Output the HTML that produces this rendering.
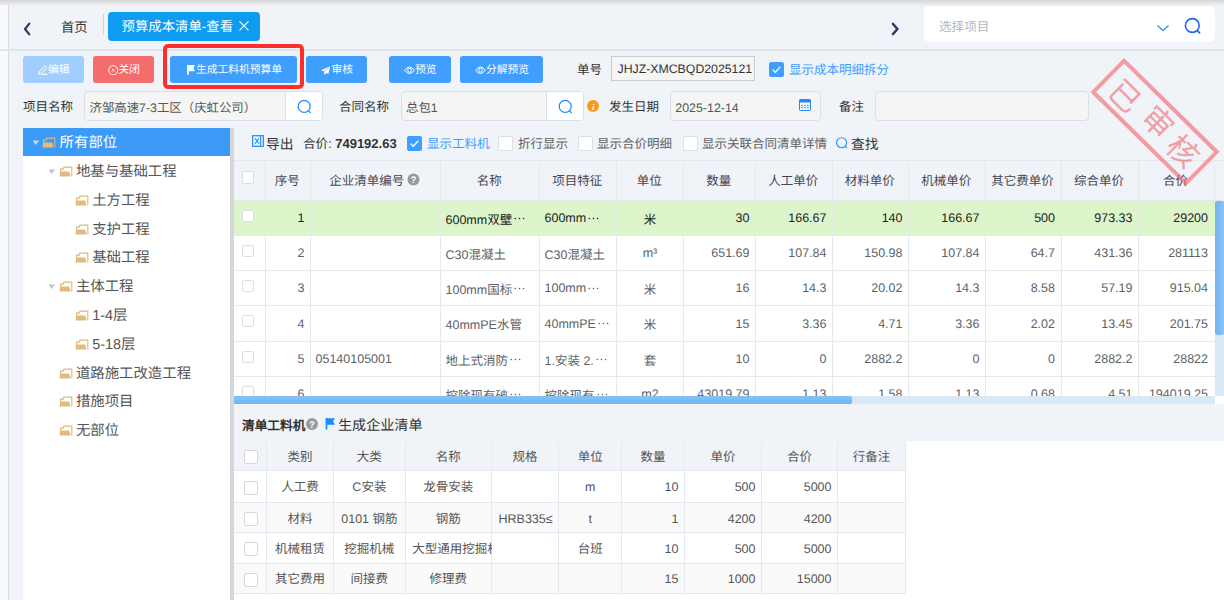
<!DOCTYPE html>
<html lang="zh-CN">
<head>
<meta charset="utf-8">
<style>
*{margin:0;padding:0;box-sizing:border-box}
html,body{width:1224px;height:600px;overflow:hidden}
body{position:relative;background:#f0f3f8;font-family:"Liberation Sans",sans-serif;color:#333;font-size:12.5px;text-rendering:geometricPrecision}
.a{position:absolute;white-space:nowrap}
.btn{position:absolute;top:56px;height:27px;border-radius:3px;color:#fff;font-size:10.75px;display:flex;align-items:center;justify-content:center;background:#409eff}
.btn svg{margin-right:1px}
.lbl{position:absolute;font-size:12.5px;color:#333;line-height:16px}
.inp{position:absolute;top:91px;height:29.5px;border:1px solid #dcdfe6;border-radius:4px;background:#f5f5f5;overflow:hidden}
.inp .t{position:absolute;left:4.5px;top:2.5px;line-height:27px;font-size:12.4px;color:#555}
.inp .s{position:absolute;top:0;right:0;bottom:0;background:#fff;border-left:1px solid #dcdfe6}
.cb{position:absolute;width:15px;height:15px;border:1px solid #dcdfe6;border-radius:2px;background:#fff}
.cb.on{background:#409eff;border-color:#409eff}
.tree{position:absolute;left:23px;top:128px;width:207px;height:472px;background:#fff}
.tr{position:absolute;left:0;width:207px;height:28px;font-size:14.4px;color:#555;line-height:28px}
.tr .tx{position:absolute;top:0}
.tr svg{position:absolute;top:10px}
.tbl{position:absolute}
.el{display:inline-block;width:13.5px;height:3px;vertical-align:3.2px}
.th{position:absolute;display:flex;align-items:center;justify-content:center;color:#555;font-size:12.5px}
.td{position:absolute;display:flex;align-items:center;font-size:12.5px;color:#606266;overflow:hidden;white-space:nowrap}
</style>
</head>
<body>
<!-- top shadow -->
<div class="a" style="left:0;top:0;width:1224px;height:6px;background:linear-gradient(#d6d6d6,#f0f3f8)"></div>
<div class="a" style="left:0;top:5px;width:9px;height:595px;background:#f9fafc;border-right:1px solid #d8dadf"></div>
<div class="a" style="left:0;top:49px;width:1224px;height:2px;background:#dfe3ea"></div>
<!-- chevron left -->
<svg class="a" style="left:22px;top:21px" width="10" height="16" viewBox="0 0 10 16"><path d="M7.3 2.6 L3 8 L7.3 13.4" fill="none" stroke="#2f3a62" stroke-width="2.2" stroke-linecap="round" stroke-linejoin="round"/></svg>
<div class="a" style="left:61px;top:18.7px;font-size:13.3px;line-height:18px;color:#333">首页</div>
<div class="a" style="left:103px;top:14px;width:1px;height:21px;background:#cfd3d9"></div>
<div class="a" style="left:108px;top:12px;width:152px;height:29px;border-radius:4px;background:#0d9cf0"></div>
<div class="a" style="left:121.5px;top:17px;font-size:13.4px;line-height:20px;color:#fff">预算成本清单-查看</div>
<svg class="a" style="left:238px;top:20px" width="12" height="12" viewBox="0 0 12 12"><path d="M1.5 1.3 L10.5 10.3 M10.5 1.3 L1.5 10.3" stroke="#fff" stroke-width="1.2"/></svg>
<!-- chevron right -->
<svg class="a" style="left:889px;top:21px" width="12" height="16" viewBox="0 0 12 16"><path d="M4 3 L8.5 8 L4 13" fill="none" stroke="#2f3a62" stroke-width="2.6" stroke-linecap="round" stroke-linejoin="round"/></svg>
<div class="a" style="left:924px;top:6px;width:291px;height:36px;border-radius:5px;background:#fff"></div>
<div class="a" style="left:939px;top:17.5px;font-size:12.6px;line-height:18px;color:#b4b8bf">选择项目</div>
<svg class="a" style="left:1155.5px;top:22.8px" width="14" height="10" viewBox="0 0 14 10"><path d="M1.5 2.5 L7 7.5 L12.5 2.5" fill="none" stroke="#3c8ef0" stroke-width="1.3"/></svg>
<svg class="a" style="left:1182px;top:16px" width="20" height="20" viewBox="0 0 20 20"><circle cx="10.3" cy="9.5" r="6.9" fill="none" stroke="#2563f5" stroke-width="1.6"/><path d="M15.3 14.6 L17.6 16.9" stroke="#2563f5" stroke-width="1.7" stroke-linecap="round"/></svg>

<!-- buttons -->
<div class="a" style="left:23px;top:56px;width:61px;height:27px;border-radius:3px;background:#a0cfff"></div><svg class="a" style="left:38px;top:65px" width="10" height="10" viewBox="0 0 10 10"><path d="M0.7 9.3 L1.1 7 L6.9 0.8 L8.9 2.5 L3.1 8.8 Z" fill="none" stroke="#fff" stroke-width="1"/><path d="M3.8 9.4 H9.2" stroke="#fff" stroke-width="1.1"/></svg><div class="a" style="left:48px;top:62.7px;font-size:10.75px;line-height:14px;color:#fff">编辑</div><div class="a" style="left:93px;top:56px;width:61px;height:27px;border-radius:3px;background:#f56c6c"></div><svg class="a" style="left:107.5px;top:64.7px" width="10.5" height="10.5" viewBox="0 0 10.5 10.5"><circle cx="5.25" cy="5.25" r="4.6" fill="none" stroke="#fff" stroke-width="1"/><path d="M3.9 3.9 L6.6 6.6 M6.6 3.9 L3.9 6.6" stroke="#fff" stroke-width="0.9"/></svg><div class="a" style="left:118.4px;top:62.7px;font-size:10.75px;line-height:14px;color:#fff">关闭</div><div class="a" style="left:170px;top:56px;width:127px;height:27px;border-radius:3px;background:#409eff"></div><svg class="a" style="left:187px;top:65px" width="8" height="10" viewBox="0 0 8 10"><path d="M0 0 H1.8 V9.8 H0 Z" fill="#fff"/><path d="M1.5 0 H7.8 L6.6 3.1 L7.8 6.2 H1.5 Z" fill="#fff"/></svg><div class="a" style="left:196.1px;top:62.7px;font-size:10.75px;line-height:14px;color:#fff">生成工料机预算单</div><div class="a" style="left:306px;top:56px;width:61px;height:27px;border-radius:3px;background:#409eff"></div><svg class="a" style="left:320.5px;top:65.5px" width="9.5" height="9.5" viewBox="0 0 9.5 9.5"><path d="M9.3 0.2 L0.2 4.3 L3.1 5.6 L3.5 9.3 L5.2 7 L7.3 8.1 Z" fill="#fff"/><path d="M3.1 5.6 L8.5 1" stroke="#409eff" stroke-width="0.6"/></svg><div class="a" style="left:331.5px;top:62.7px;font-size:10.75px;line-height:14px;color:#fff">审核</div><div class="a" style="left:389px;top:56px;width:62px;height:27px;border-radius:3px;background:#409eff"></div><svg class="a" style="left:403.8px;top:65.8px" width="11" height="8.5" viewBox="0 0 11 8.5"><path d="M0.6 4.25 Q5.5 -2.2 10.4 4.25 Q5.5 10.7 0.6 4.25 Z" fill="none" stroke="#fff" stroke-width="1"/><circle cx="5.5" cy="4.25" r="1.9" fill="none" stroke="#fff" stroke-width="1"/></svg><div class="a" style="left:415px;top:62.7px;font-size:10.75px;line-height:14px;color:#fff">预览</div><div class="a" style="left:460px;top:56px;width:83px;height:27px;border-radius:3px;background:#409eff"></div><svg class="a" style="left:474.7px;top:65.8px" width="11" height="8.5" viewBox="0 0 11 8.5"><path d="M0.6 4.25 Q5.5 -2.2 10.4 4.25 Q5.5 10.7 0.6 4.25 Z" fill="none" stroke="#fff" stroke-width="1"/><circle cx="5.5" cy="4.25" r="1.9" fill="none" stroke="#fff" stroke-width="1"/></svg><div class="a" style="left:486px;top:62.7px;font-size:10.75px;line-height:14px;color:#fff">分解预览</div>
<div class="a" style="left:163px;top:44px;width:141px;height:45px;border:4px solid #fd2e2e;border-radius:5px"></div>

<div class="lbl" style="left:577px;top:62.2px">单号</div>
<div class="a" style="left:611px;top:56px;width:144px;height:25px;border:1px solid #c9cbcf;background:#f5f5f5;font-size:12.3px;line-height:25px;padding-left:5.5px;color:#333;overflow:hidden">JHJZ-XMCBQD2025121</div>
<div class="cb on" style="left:769px;top:62px"><svg width="15" height="15" viewBox="0 0 15 15" style="position:absolute;left:-1px;top:-1px"><path d="M3.6 7.6 L6.3 10.3 L11.4 4.6" fill="none" stroke="#fff" stroke-width="1.3"/></svg></div>
<div class="lbl" style="left:789px;top:62.2px;color:#409eff">显示成本明细拆分</div>

<div class="lbl" style="left:23px;top:98.9px">项目名称</div>
<div class="inp" style="left:84px;width:238.5px"><div class="t">济邹高速7-3工区（庆虹公司）</div><div class="s" style="width:37px"><svg style="position:absolute;left:10px;top:5.5px" width="18" height="18" viewBox="0 0 18 18"><circle cx="8.2" cy="8.4" r="6" fill="none" stroke="#1a8cff" stroke-width="1.25"/><path d="M12.4 12.6 L14.4 14.6" stroke="#1a8cff" stroke-width="1.3" stroke-linecap="round"/></svg></div></div>
<div class="lbl" style="left:339px;top:98.9px">合同名称</div>
<div class="inp" style="left:400.5px;width:183px"><div class="t">总包1</div><div class="s" style="width:37px"><svg style="position:absolute;left:10px;top:5.5px" width="18" height="18" viewBox="0 0 18 18"><circle cx="8.2" cy="8.4" r="6" fill="none" stroke="#1a8cff" stroke-width="1.25"/><path d="M12.4 12.6 L14.4 14.6" stroke="#1a8cff" stroke-width="1.3" stroke-linecap="round"/></svg></div></div>
<svg class="a" style="left:587px;top:100px" width="12" height="12" viewBox="0 0 12 12"><circle cx="6" cy="6" r="6" fill="#f79a1f"/><text x="6.3" y="10" text-anchor="middle" font-size="9" font-style="italic" font-weight="bold" fill="#fff" font-family="Liberation Serif">i</text></svg>
<div class="lbl" style="left:609px;top:98.9px">发生日期</div>
<div class="inp" style="left:669.8px;width:151.3px"><div class="t">2025-12-14</div><svg style="position:absolute;left:128.2px;top:6.7px" width="12" height="12" viewBox="0 0 12 12"><rect x="0.5" y="0.5" width="11" height="11" rx="0.8" fill="none" stroke="#1a8cff" stroke-width="1"/><rect x="0.5" y="0.5" width="11" height="3" fill="#1a8cff"/><g fill="#1a8cff"><rect x="2.3" y="5.9" width="1.5" height="1.1"/><rect x="5.2" y="5.9" width="1.5" height="1.1"/><rect x="8.1" y="5.9" width="1.5" height="1.1"/><rect x="2.3" y="8.1" width="1.5" height="1.1"/><rect x="5.2" y="8.1" width="1.5" height="1.1"/><rect x="8.1" y="8.1" width="1.5" height="1.1"/></g></svg></div>
<div class="lbl" style="left:839px;top:98.9px">备注</div>
<div class="inp" style="left:875px;width:214px"></div>

<!-- tree -->
<div class="tree"></div>
<div class="a" style="left:230px;top:128px;width:4px;height:472px;background:#d5d7db"></div>


<div class="a" style="left:23px;top:128px;width:207px;height:27.8px;background:#3d9bf8"></div>
<svg class="a" style="left:32px;top:139.7px" width="8" height="6" viewBox="0 0 8 6"><path d="M0.5 0.5 H7 L3.75 5 Z" fill="#c8d6ea"/></svg>
<svg class="a" style="left:42.4px;top:137.2px" width="14" height="12" viewBox="0 0 14 12"><path d="M1.6 10.3 V3.1 H4.2 L4.9 1.1 H12.8 V10.3" fill="none" stroke="#dfb676" stroke-width="1.1"/><path d="M0.6 10.6 L1 5.6 H10.2 L11.6 10.6 Z" fill="#e0bb7c"/></svg>
<div class="a" style="left:59.6px;top:133.2px;line-height:20px;font-size:14.4px;color:#fff">所有部位</div>
<svg class="a" style="left:48px;top:168.5px" width="8" height="6" viewBox="0 0 8 6"><path d="M0.5 0.5 H7 L3.75 5 Z" fill="#c0c4cc"/></svg>
<svg class="a" style="left:58.8px;top:166.0px" width="14" height="12" viewBox="0 0 14 12"><path d="M1.6 10.3 V3.1 H4.2 L4.9 1.1 H12.8 V10.3" fill="none" stroke="#dfb676" stroke-width="1.1"/><path d="M0.6 10.6 L1 5.6 H10.2 L11.6 10.6 Z" fill="#e0bb7c"/></svg>
<div class="a" style="left:75.9px;top:162.0px;line-height:20px;font-size:14.4px;color:#555">地基与基础工程</div>
<svg class="a" style="left:74.9px;top:194.8px" width="14" height="12" viewBox="0 0 14 12"><path d="M1.6 10.3 V3.1 H4.2 L4.9 1.1 H12.8 V10.3" fill="none" stroke="#dfb676" stroke-width="1.1"/><path d="M0.6 10.6 L1 5.6 H10.2 L11.6 10.6 Z" fill="#e0bb7c"/></svg>
<div class="a" style="left:92.2px;top:190.8px;line-height:20px;font-size:14.4px;color:#555">土方工程</div>
<svg class="a" style="left:74.9px;top:223.6px" width="14" height="12" viewBox="0 0 14 12"><path d="M1.6 10.3 V3.1 H4.2 L4.9 1.1 H12.8 V10.3" fill="none" stroke="#dfb676" stroke-width="1.1"/><path d="M0.6 10.6 L1 5.6 H10.2 L11.6 10.6 Z" fill="#e0bb7c"/></svg>
<div class="a" style="left:92.2px;top:219.6px;line-height:20px;font-size:14.4px;color:#555">支护工程</div>
<svg class="a" style="left:74.9px;top:252.4px" width="14" height="12" viewBox="0 0 14 12"><path d="M1.6 10.3 V3.1 H4.2 L4.9 1.1 H12.8 V10.3" fill="none" stroke="#dfb676" stroke-width="1.1"/><path d="M0.6 10.6 L1 5.6 H10.2 L11.6 10.6 Z" fill="#e0bb7c"/></svg>
<div class="a" style="left:92.2px;top:248.4px;line-height:20px;font-size:14.4px;color:#555">基础工程</div>
<svg class="a" style="left:48px;top:283.7px" width="8" height="6" viewBox="0 0 8 6"><path d="M0.5 0.5 H7 L3.75 5 Z" fill="#c0c4cc"/></svg>
<svg class="a" style="left:58.8px;top:281.2px" width="14" height="12" viewBox="0 0 14 12"><path d="M1.6 10.3 V3.1 H4.2 L4.9 1.1 H12.8 V10.3" fill="none" stroke="#dfb676" stroke-width="1.1"/><path d="M0.6 10.6 L1 5.6 H10.2 L11.6 10.6 Z" fill="#e0bb7c"/></svg>
<div class="a" style="left:75.9px;top:277.2px;line-height:20px;font-size:14.4px;color:#555">主体工程</div>
<svg class="a" style="left:74.9px;top:310.0px" width="14" height="12" viewBox="0 0 14 12"><path d="M1.6 10.3 V3.1 H4.2 L4.9 1.1 H12.8 V10.3" fill="none" stroke="#dfb676" stroke-width="1.1"/><path d="M0.6 10.6 L1 5.6 H10.2 L11.6 10.6 Z" fill="#e0bb7c"/></svg>
<div class="a" style="left:92.2px;top:306.0px;line-height:20px;font-size:14.4px;color:#555">1-4层</div>
<svg class="a" style="left:74.9px;top:338.8px" width="14" height="12" viewBox="0 0 14 12"><path d="M1.6 10.3 V3.1 H4.2 L4.9 1.1 H12.8 V10.3" fill="none" stroke="#dfb676" stroke-width="1.1"/><path d="M0.6 10.6 L1 5.6 H10.2 L11.6 10.6 Z" fill="#e0bb7c"/></svg>
<div class="a" style="left:92.2px;top:334.8px;line-height:20px;font-size:14.4px;color:#555">5-18层</div>
<svg class="a" style="left:58.8px;top:367.6px" width="14" height="12" viewBox="0 0 14 12"><path d="M1.6 10.3 V3.1 H4.2 L4.9 1.1 H12.8 V10.3" fill="none" stroke="#dfb676" stroke-width="1.1"/><path d="M0.6 10.6 L1 5.6 H10.2 L11.6 10.6 Z" fill="#e0bb7c"/></svg>
<div class="a" style="left:75.9px;top:363.6px;line-height:20px;font-size:14.4px;color:#555">道路施工改造工程</div>
<svg class="a" style="left:58.8px;top:396.4px" width="14" height="12" viewBox="0 0 14 12"><path d="M1.6 10.3 V3.1 H4.2 L4.9 1.1 H12.8 V10.3" fill="none" stroke="#dfb676" stroke-width="1.1"/><path d="M0.6 10.6 L1 5.6 H10.2 L11.6 10.6 Z" fill="#e0bb7c"/></svg>
<div class="a" style="left:75.9px;top:392.4px;line-height:20px;font-size:14.4px;color:#555">措施项目</div>
<svg class="a" style="left:58.8px;top:425.2px" width="14" height="12" viewBox="0 0 14 12"><path d="M1.6 10.3 V3.1 H4.2 L4.9 1.1 H12.8 V10.3" fill="none" stroke="#dfb676" stroke-width="1.1"/><path d="M0.6 10.6 L1 5.6 H10.2 L11.6 10.6 Z" fill="#e0bb7c"/></svg>
<div class="a" style="left:75.9px;top:421.2px;line-height:20px;font-size:14.4px;color:#555">无部位</div>
<svg class="a" style="left:252px;top:135px" width="12" height="12" viewBox="0 0 12 12"><rect x="0.7" y="0.7" width="10.6" height="10.6" fill="none" stroke="#1a8cff" stroke-width="1.2"/><path d="M3 3.2 L7 8.8 M7 3.2 L3 8.8" stroke="#1a8cff" stroke-width="1.1"/><path d="M8.6 1 V11" stroke="#1a8cff" stroke-width="1.1"/></svg>
<div class="a" style="left:266px;top:135.5px;font-size:13.8px;line-height:18px;color:#333">导出</div>
<div class="a" style="left:303px;top:136px;font-size:12.6px;line-height:16px;color:#333">合价: <b style="font-size:13px">749192.63</b></div>
<div class="cb on" style="left:407px;top:136px"><svg width="15" height="15" viewBox="0 0 15 15" style="position:absolute;left:-1px;top:-1px"><path d="M3.6 7.6 L6.3 10.3 L11.4 4.6" fill="none" stroke="#fff" stroke-width="1.3"/></svg></div>
<div class="a" style="left:427px;top:135.8px;font-size:12.5px;line-height:16px;color:#409eff">显示工料机</div>
<div class="cb" style="left:498px;top:136px"></div>
<div class="a" style="left:518px;top:135.8px;font-size:12.5px;line-height:16px;color:#606266">折行显示</div>
<div class="cb" style="left:577.5px;top:136px"></div>
<div class="a" style="left:597px;top:135.8px;font-size:12.5px;line-height:16px;color:#606266">显示合价明细</div>
<div class="cb" style="left:682.5px;top:136px"></div>
<div class="a" style="left:702px;top:135.8px;font-size:12.5px;line-height:16px;color:#606266">显示关联合同清单详情</div>
<svg class="a" style="left:835px;top:136px" width="14" height="14" viewBox="0 0 14 14"><circle cx="6.6" cy="6.7" r="5" fill="none" stroke="#2a94ff" stroke-width="1.15"/><path d="M10.2 10.3 L11.9 12" stroke="#2a94ff" stroke-width="1.2"/></svg>
<div class="a" style="left:851px;top:135.5px;font-size:13.8px;line-height:18px;color:#333">查找</div>
<div class="a" style="left:234px;top:160px;width:990px;height:40.5px;background:#f0f3f8;border-top:1px solid #e4e7ed;border-bottom:1px solid #e4e7ed"></div>
<div class="a" style="left:264.75px;top:160px;width:1px;height:40.5px;background:#e4e7ed"></div>
<div class="a" style="left:310.0px;top:160px;width:1px;height:40.5px;background:#e4e7ed"></div>
<div class="a" style="left:440.0px;top:160px;width:1px;height:40.5px;background:#e4e7ed"></div>
<div class="a" style="left:539.0px;top:160px;width:1px;height:40.5px;background:#e4e7ed"></div>
<div class="a" style="left:616.0px;top:160px;width:1px;height:40.5px;background:#e4e7ed"></div>
<div class="a" style="left:683.0px;top:160px;width:1px;height:40.5px;background:#e4e7ed"></div>
<div class="a" style="left:755.0px;top:160px;width:1px;height:40.5px;background:#e4e7ed"></div>
<div class="a" style="left:832.0px;top:160px;width:1px;height:40.5px;background:#e4e7ed"></div>
<div class="a" style="left:908.0px;top:160px;width:1px;height:40.5px;background:#e4e7ed"></div>
<div class="a" style="left:985.0px;top:160px;width:1px;height:40.5px;background:#e4e7ed"></div>
<div class="a" style="left:1060.5px;top:160px;width:1px;height:40.5px;background:#e4e7ed"></div>
<div class="a" style="left:1138.0px;top:160px;width:1px;height:40.5px;background:#e4e7ed"></div>
<div class="a" style="left:1213.5px;top:160px;width:1px;height:40.5px;background:#e4e7ed"></div>
<div class="th" style="left:264.55px;top:159px;width:45.25px;height:40.5px;color:#434755">序号</div>
<div class="th" style="left:309.8px;top:159px;width:130.0px;height:40.5px;color:#434755">企业清单编号<svg width="13" height="13" viewBox="0 0 13 13" style="margin-left:3px"><circle cx="6.5" cy="6.5" r="6" fill="#999"/><text x="6.5" y="10" text-anchor="middle" font-size="9.5" font-weight="bold" fill="#fff" font-family="Liberation Sans">?</text></svg></div>
<div class="th" style="left:439.8px;top:159px;width:99.0px;height:40.5px;color:#434755">名称</div>
<div class="th" style="left:538.8px;top:159px;width:77.0px;height:40.5px;color:#434755">项目特征</div>
<div class="th" style="left:615.8px;top:159px;width:67.0px;height:40.5px;color:#434755">单位</div>
<div class="th" style="left:682.8px;top:159px;width:72.0px;height:40.5px;color:#434755">数量</div>
<div class="th" style="left:754.8px;top:159px;width:77.0px;height:40.5px;color:#434755">人工单价</div>
<div class="th" style="left:831.8px;top:159px;width:76.0px;height:40.5px;color:#434755">材料单价</div>
<div class="th" style="left:907.8px;top:159px;width:77.0px;height:40.5px;color:#434755">机械单价</div>
<div class="th" style="left:984.8px;top:159px;width:75.5px;height:40.5px;color:#434755">其它费单价</div>
<div class="th" style="left:1060.3px;top:159px;width:77.5px;height:40.5px;color:#434755">综合单价</div>
<div class="th" style="left:1137.8px;top:159px;width:75.5px;height:40.5px;color:#434755">合价</div>
<div class="cb" style="left:241.5px;top:171px;width:12.5px;height:12.5px;border-color:#dcdfe6"></div>
<div class="a" style="left:234px;top:200.5px;width:990px;height:195.5px;overflow:hidden">
<div class="a" style="left:0;top:0.0px;width:990px;height:35.0px;background:#dcf5ca;border-bottom:1px solid #e8e9eb"></div>
<div class="a" style="left:30.75px;top:0.0px;width:1px;height:35.0px;background:#e8e9eb"></div>
<div class="a" style="left:76.0px;top:0.0px;width:1px;height:35.0px;background:#e8e9eb"></div>
<div class="a" style="left:206.0px;top:0.0px;width:1px;height:35.0px;background:#e8e9eb"></div>
<div class="a" style="left:305.0px;top:0.0px;width:1px;height:35.0px;background:#e8e9eb"></div>
<div class="a" style="left:382.0px;top:0.0px;width:1px;height:35.0px;background:#e8e9eb"></div>
<div class="a" style="left:449.0px;top:0.0px;width:1px;height:35.0px;background:#e8e9eb"></div>
<div class="a" style="left:521.0px;top:0.0px;width:1px;height:35.0px;background:#e8e9eb"></div>
<div class="a" style="left:598.0px;top:0.0px;width:1px;height:35.0px;background:#e8e9eb"></div>
<div class="a" style="left:674.0px;top:0.0px;width:1px;height:35.0px;background:#e8e9eb"></div>
<div class="a" style="left:751.0px;top:0.0px;width:1px;height:35.0px;background:#e8e9eb"></div>
<div class="a" style="left:826.5px;top:0.0px;width:1px;height:35.0px;background:#e8e9eb"></div>
<div class="a" style="left:904.0px;top:0.0px;width:1px;height:35.0px;background:#e8e9eb"></div>
<div class="cb" style="left:7.5px;top:9.0px;width:12.5px;height:12.5px;border-color:#dcdfe6"></div>
<div class="td" style="left:31.25px;top:0.2px;width:45.25px;height:35.0px;justify-content:flex-end;padding-right:6px;color:#222">1</div>
<div class="td" style="left:76.5px;top:0.2px;width:130.0px;height:35.0px;padding-left:5px;color:#222"></div>
<div class="td" style="left:206.5px;top:0.2px;width:99.0px;height:35.0px;padding-left:5px;color:#222">600mm双壁<svg class="el" viewBox="0 0 13.5 3"><circle cx="3.3" cy="1.5" r="0.8" fill="currentColor"/><circle cx="7.45" cy="1.5" r="0.8" fill="currentColor"/><circle cx="11.6" cy="1.5" r="0.8" fill="currentColor"/></svg></div>
<div class="td" style="left:305.5px;top:0.2px;width:77.0px;height:35.0px;padding-left:5px;color:#222">600mm<svg class="el" viewBox="0 0 13.5 3"><circle cx="3.3" cy="1.5" r="0.8" fill="currentColor"/><circle cx="7.45" cy="1.5" r="0.8" fill="currentColor"/><circle cx="11.6" cy="1.5" r="0.8" fill="currentColor"/></svg></div>
<div class="td" style="left:382.5px;top:0.2px;width:67.0px;height:35.0px;justify-content:center;color:#222">米</div>
<div class="td" style="left:449.5px;top:0.2px;width:72.0px;height:35.0px;justify-content:flex-end;padding-right:6px;color:#222">30</div>
<div class="td" style="left:521.5px;top:0.2px;width:77.0px;height:35.0px;justify-content:flex-end;padding-right:6px;color:#222">166.67</div>
<div class="td" style="left:598.5px;top:0.2px;width:76.0px;height:35.0px;justify-content:flex-end;padding-right:6px;color:#222">140</div>
<div class="td" style="left:674.5px;top:0.2px;width:77.0px;height:35.0px;justify-content:flex-end;padding-right:6px;color:#222">166.67</div>
<div class="td" style="left:751.5px;top:0.2px;width:75.5px;height:35.0px;justify-content:flex-end;padding-right:6px;color:#222">500</div>
<div class="td" style="left:827px;top:0.2px;width:77.5px;height:35.0px;justify-content:flex-end;padding-right:6px;color:#222">973.33</div>
<div class="td" style="left:904.5px;top:0.2px;width:75.5px;height:35.0px;justify-content:flex-end;padding-right:6px;color:#222">29200</div>
<div class="a" style="left:0;top:35.0px;width:990px;height:35.0px;background:#fff;border-bottom:1px solid #e8e9eb"></div>
<div class="a" style="left:30.75px;top:35.0px;width:1px;height:35.0px;background:#e8e9eb"></div>
<div class="a" style="left:76.0px;top:35.0px;width:1px;height:35.0px;background:#e8e9eb"></div>
<div class="a" style="left:206.0px;top:35.0px;width:1px;height:35.0px;background:#e8e9eb"></div>
<div class="a" style="left:305.0px;top:35.0px;width:1px;height:35.0px;background:#e8e9eb"></div>
<div class="a" style="left:382.0px;top:35.0px;width:1px;height:35.0px;background:#e8e9eb"></div>
<div class="a" style="left:449.0px;top:35.0px;width:1px;height:35.0px;background:#e8e9eb"></div>
<div class="a" style="left:521.0px;top:35.0px;width:1px;height:35.0px;background:#e8e9eb"></div>
<div class="a" style="left:598.0px;top:35.0px;width:1px;height:35.0px;background:#e8e9eb"></div>
<div class="a" style="left:674.0px;top:35.0px;width:1px;height:35.0px;background:#e8e9eb"></div>
<div class="a" style="left:751.0px;top:35.0px;width:1px;height:35.0px;background:#e8e9eb"></div>
<div class="a" style="left:826.5px;top:35.0px;width:1px;height:35.0px;background:#e8e9eb"></div>
<div class="a" style="left:904.0px;top:35.0px;width:1px;height:35.0px;background:#e8e9eb"></div>
<div class="cb" style="left:7.5px;top:44.0px;width:12.5px;height:12.5px;border-color:#dcdfe6"></div>
<div class="td" style="left:31.25px;top:35.2px;width:45.25px;height:35.0px;justify-content:flex-end;padding-right:6px;color:#606266">2</div>
<div class="td" style="left:76.5px;top:35.2px;width:130.0px;height:35.0px;padding-left:5px;color:#606266"></div>
<div class="td" style="left:206.5px;top:35.2px;width:99.0px;height:35.0px;padding-left:5px;color:#606266">C30混凝土</div>
<div class="td" style="left:305.5px;top:35.2px;width:77.0px;height:35.0px;padding-left:5px;color:#606266">C30混凝土</div>
<div class="td" style="left:382.5px;top:35.2px;width:67.0px;height:35.0px;justify-content:center;color:#606266">m³</div>
<div class="td" style="left:449.5px;top:35.2px;width:72.0px;height:35.0px;justify-content:flex-end;padding-right:6px;color:#606266">651.69</div>
<div class="td" style="left:521.5px;top:35.2px;width:77.0px;height:35.0px;justify-content:flex-end;padding-right:6px;color:#606266">107.84</div>
<div class="td" style="left:598.5px;top:35.2px;width:76.0px;height:35.0px;justify-content:flex-end;padding-right:6px;color:#606266">150.98</div>
<div class="td" style="left:674.5px;top:35.2px;width:77.0px;height:35.0px;justify-content:flex-end;padding-right:6px;color:#606266">107.84</div>
<div class="td" style="left:751.5px;top:35.2px;width:75.5px;height:35.0px;justify-content:flex-end;padding-right:6px;color:#606266">64.7</div>
<div class="td" style="left:827px;top:35.2px;width:77.5px;height:35.0px;justify-content:flex-end;padding-right:6px;color:#606266">431.36</div>
<div class="td" style="left:904.5px;top:35.2px;width:75.5px;height:35.0px;justify-content:flex-end;padding-right:6px;color:#606266">281113</div>
<div class="a" style="left:0;top:70.0px;width:990px;height:35.0px;background:#fff;border-bottom:1px solid #e8e9eb"></div>
<div class="a" style="left:30.75px;top:70.0px;width:1px;height:35.0px;background:#e8e9eb"></div>
<div class="a" style="left:76.0px;top:70.0px;width:1px;height:35.0px;background:#e8e9eb"></div>
<div class="a" style="left:206.0px;top:70.0px;width:1px;height:35.0px;background:#e8e9eb"></div>
<div class="a" style="left:305.0px;top:70.0px;width:1px;height:35.0px;background:#e8e9eb"></div>
<div class="a" style="left:382.0px;top:70.0px;width:1px;height:35.0px;background:#e8e9eb"></div>
<div class="a" style="left:449.0px;top:70.0px;width:1px;height:35.0px;background:#e8e9eb"></div>
<div class="a" style="left:521.0px;top:70.0px;width:1px;height:35.0px;background:#e8e9eb"></div>
<div class="a" style="left:598.0px;top:70.0px;width:1px;height:35.0px;background:#e8e9eb"></div>
<div class="a" style="left:674.0px;top:70.0px;width:1px;height:35.0px;background:#e8e9eb"></div>
<div class="a" style="left:751.0px;top:70.0px;width:1px;height:35.0px;background:#e8e9eb"></div>
<div class="a" style="left:826.5px;top:70.0px;width:1px;height:35.0px;background:#e8e9eb"></div>
<div class="a" style="left:904.0px;top:70.0px;width:1px;height:35.0px;background:#e8e9eb"></div>
<div class="cb" style="left:7.5px;top:79.0px;width:12.5px;height:12.5px;border-color:#dcdfe6"></div>
<div class="td" style="left:31.25px;top:70.2px;width:45.25px;height:35.0px;justify-content:flex-end;padding-right:6px;color:#606266">3</div>
<div class="td" style="left:76.5px;top:70.2px;width:130.0px;height:35.0px;padding-left:5px;color:#606266"></div>
<div class="td" style="left:206.5px;top:70.2px;width:99.0px;height:35.0px;padding-left:5px;color:#606266">100mm国标<svg class="el" viewBox="0 0 13.5 3"><circle cx="3.3" cy="1.5" r="0.8" fill="currentColor"/><circle cx="7.45" cy="1.5" r="0.8" fill="currentColor"/><circle cx="11.6" cy="1.5" r="0.8" fill="currentColor"/></svg></div>
<div class="td" style="left:305.5px;top:70.2px;width:77.0px;height:35.0px;padding-left:5px;color:#606266">100mm<svg class="el" viewBox="0 0 13.5 3"><circle cx="3.3" cy="1.5" r="0.8" fill="currentColor"/><circle cx="7.45" cy="1.5" r="0.8" fill="currentColor"/><circle cx="11.6" cy="1.5" r="0.8" fill="currentColor"/></svg></div>
<div class="td" style="left:382.5px;top:70.2px;width:67.0px;height:35.0px;justify-content:center;color:#606266">米</div>
<div class="td" style="left:449.5px;top:70.2px;width:72.0px;height:35.0px;justify-content:flex-end;padding-right:6px;color:#606266">16</div>
<div class="td" style="left:521.5px;top:70.2px;width:77.0px;height:35.0px;justify-content:flex-end;padding-right:6px;color:#606266">14.3</div>
<div class="td" style="left:598.5px;top:70.2px;width:76.0px;height:35.0px;justify-content:flex-end;padding-right:6px;color:#606266">20.02</div>
<div class="td" style="left:674.5px;top:70.2px;width:77.0px;height:35.0px;justify-content:flex-end;padding-right:6px;color:#606266">14.3</div>
<div class="td" style="left:751.5px;top:70.2px;width:75.5px;height:35.0px;justify-content:flex-end;padding-right:6px;color:#606266">8.58</div>
<div class="td" style="left:827px;top:70.2px;width:77.5px;height:35.0px;justify-content:flex-end;padding-right:6px;color:#606266">57.19</div>
<div class="td" style="left:904.5px;top:70.2px;width:75.5px;height:35.0px;justify-content:flex-end;padding-right:6px;color:#606266">915.04</div>
<div class="a" style="left:0;top:105.0px;width:990px;height:36.0px;background:#fff;border-bottom:1px solid #e8e9eb"></div>
<div class="a" style="left:30.75px;top:105.0px;width:1px;height:36.0px;background:#e8e9eb"></div>
<div class="a" style="left:76.0px;top:105.0px;width:1px;height:36.0px;background:#e8e9eb"></div>
<div class="a" style="left:206.0px;top:105.0px;width:1px;height:36.0px;background:#e8e9eb"></div>
<div class="a" style="left:305.0px;top:105.0px;width:1px;height:36.0px;background:#e8e9eb"></div>
<div class="a" style="left:382.0px;top:105.0px;width:1px;height:36.0px;background:#e8e9eb"></div>
<div class="a" style="left:449.0px;top:105.0px;width:1px;height:36.0px;background:#e8e9eb"></div>
<div class="a" style="left:521.0px;top:105.0px;width:1px;height:36.0px;background:#e8e9eb"></div>
<div class="a" style="left:598.0px;top:105.0px;width:1px;height:36.0px;background:#e8e9eb"></div>
<div class="a" style="left:674.0px;top:105.0px;width:1px;height:36.0px;background:#e8e9eb"></div>
<div class="a" style="left:751.0px;top:105.0px;width:1px;height:36.0px;background:#e8e9eb"></div>
<div class="a" style="left:826.5px;top:105.0px;width:1px;height:36.0px;background:#e8e9eb"></div>
<div class="a" style="left:904.0px;top:105.0px;width:1px;height:36.0px;background:#e8e9eb"></div>
<div class="cb" style="left:7.5px;top:114.0px;width:12.5px;height:12.5px;border-color:#dcdfe6"></div>
<div class="td" style="left:31.25px;top:105.2px;width:45.25px;height:36.0px;justify-content:flex-end;padding-right:6px;color:#606266">4</div>
<div class="td" style="left:76.5px;top:105.2px;width:130.0px;height:36.0px;padding-left:5px;color:#606266"></div>
<div class="td" style="left:206.5px;top:105.2px;width:99.0px;height:36.0px;padding-left:5px;color:#606266">40mmPE水管</div>
<div class="td" style="left:305.5px;top:105.2px;width:77.0px;height:36.0px;padding-left:5px;color:#606266">40mmPE<svg class="el" viewBox="0 0 13.5 3"><circle cx="3.3" cy="1.5" r="0.8" fill="currentColor"/><circle cx="7.45" cy="1.5" r="0.8" fill="currentColor"/><circle cx="11.6" cy="1.5" r="0.8" fill="currentColor"/></svg></div>
<div class="td" style="left:382.5px;top:105.2px;width:67.0px;height:36.0px;justify-content:center;color:#606266">米</div>
<div class="td" style="left:449.5px;top:105.2px;width:72.0px;height:36.0px;justify-content:flex-end;padding-right:6px;color:#606266">15</div>
<div class="td" style="left:521.5px;top:105.2px;width:77.0px;height:36.0px;justify-content:flex-end;padding-right:6px;color:#606266">3.36</div>
<div class="td" style="left:598.5px;top:105.2px;width:76.0px;height:36.0px;justify-content:flex-end;padding-right:6px;color:#606266">4.71</div>
<div class="td" style="left:674.5px;top:105.2px;width:77.0px;height:36.0px;justify-content:flex-end;padding-right:6px;color:#606266">3.36</div>
<div class="td" style="left:751.5px;top:105.2px;width:75.5px;height:36.0px;justify-content:flex-end;padding-right:6px;color:#606266">2.02</div>
<div class="td" style="left:827px;top:105.2px;width:77.5px;height:36.0px;justify-content:flex-end;padding-right:6px;color:#606266">13.45</div>
<div class="td" style="left:904.5px;top:105.2px;width:75.5px;height:36.0px;justify-content:flex-end;padding-right:6px;color:#606266">201.75</div>
<div class="a" style="left:0;top:141.0px;width:990px;height:35.0px;background:#fff;border-bottom:1px solid #e8e9eb"></div>
<div class="a" style="left:30.75px;top:141.0px;width:1px;height:35.0px;background:#e8e9eb"></div>
<div class="a" style="left:76.0px;top:141.0px;width:1px;height:35.0px;background:#e8e9eb"></div>
<div class="a" style="left:206.0px;top:141.0px;width:1px;height:35.0px;background:#e8e9eb"></div>
<div class="a" style="left:305.0px;top:141.0px;width:1px;height:35.0px;background:#e8e9eb"></div>
<div class="a" style="left:382.0px;top:141.0px;width:1px;height:35.0px;background:#e8e9eb"></div>
<div class="a" style="left:449.0px;top:141.0px;width:1px;height:35.0px;background:#e8e9eb"></div>
<div class="a" style="left:521.0px;top:141.0px;width:1px;height:35.0px;background:#e8e9eb"></div>
<div class="a" style="left:598.0px;top:141.0px;width:1px;height:35.0px;background:#e8e9eb"></div>
<div class="a" style="left:674.0px;top:141.0px;width:1px;height:35.0px;background:#e8e9eb"></div>
<div class="a" style="left:751.0px;top:141.0px;width:1px;height:35.0px;background:#e8e9eb"></div>
<div class="a" style="left:826.5px;top:141.0px;width:1px;height:35.0px;background:#e8e9eb"></div>
<div class="a" style="left:904.0px;top:141.0px;width:1px;height:35.0px;background:#e8e9eb"></div>
<div class="cb" style="left:7.5px;top:150.0px;width:12.5px;height:12.5px;border-color:#dcdfe6"></div>
<div class="td" style="left:31.25px;top:141.2px;width:45.25px;height:35.0px;justify-content:flex-end;padding-right:6px;color:#606266">5</div>
<div class="td" style="left:76.5px;top:141.2px;width:130.0px;height:35.0px;padding-left:5px;color:#606266">05140105001</div>
<div class="td" style="left:206.5px;top:141.2px;width:99.0px;height:35.0px;padding-left:5px;color:#606266">地上式消防<svg class="el" viewBox="0 0 13.5 3"><circle cx="3.3" cy="1.5" r="0.8" fill="currentColor"/><circle cx="7.45" cy="1.5" r="0.8" fill="currentColor"/><circle cx="11.6" cy="1.5" r="0.8" fill="currentColor"/></svg></div>
<div class="td" style="left:305.5px;top:141.2px;width:77.0px;height:35.0px;padding-left:5px;color:#606266">1.安装 2.<svg class="el" viewBox="0 0 13.5 3"><circle cx="3.3" cy="1.5" r="0.8" fill="currentColor"/><circle cx="7.45" cy="1.5" r="0.8" fill="currentColor"/><circle cx="11.6" cy="1.5" r="0.8" fill="currentColor"/></svg></div>
<div class="td" style="left:382.5px;top:141.2px;width:67.0px;height:35.0px;justify-content:center;color:#606266">套</div>
<div class="td" style="left:449.5px;top:141.2px;width:72.0px;height:35.0px;justify-content:flex-end;padding-right:6px;color:#606266">10</div>
<div class="td" style="left:521.5px;top:141.2px;width:77.0px;height:35.0px;justify-content:flex-end;padding-right:6px;color:#606266">0</div>
<div class="td" style="left:598.5px;top:141.2px;width:76.0px;height:35.0px;justify-content:flex-end;padding-right:6px;color:#606266">2882.2</div>
<div class="td" style="left:674.5px;top:141.2px;width:77.0px;height:35.0px;justify-content:flex-end;padding-right:6px;color:#606266">0</div>
<div class="td" style="left:751.5px;top:141.2px;width:75.5px;height:35.0px;justify-content:flex-end;padding-right:6px;color:#606266">0</div>
<div class="td" style="left:827px;top:141.2px;width:77.5px;height:35.0px;justify-content:flex-end;padding-right:6px;color:#606266">2882.2</div>
<div class="td" style="left:904.5px;top:141.2px;width:75.5px;height:35.0px;justify-content:flex-end;padding-right:6px;color:#606266">28822</div>
<div class="a" style="left:0;top:176.0px;width:990px;height:35.5px;background:#fff;border-bottom:1px solid #e8e9eb"></div>
<div class="a" style="left:30.75px;top:176.0px;width:1px;height:35.5px;background:#e8e9eb"></div>
<div class="a" style="left:76.0px;top:176.0px;width:1px;height:35.5px;background:#e8e9eb"></div>
<div class="a" style="left:206.0px;top:176.0px;width:1px;height:35.5px;background:#e8e9eb"></div>
<div class="a" style="left:305.0px;top:176.0px;width:1px;height:35.5px;background:#e8e9eb"></div>
<div class="a" style="left:382.0px;top:176.0px;width:1px;height:35.5px;background:#e8e9eb"></div>
<div class="a" style="left:449.0px;top:176.0px;width:1px;height:35.5px;background:#e8e9eb"></div>
<div class="a" style="left:521.0px;top:176.0px;width:1px;height:35.5px;background:#e8e9eb"></div>
<div class="a" style="left:598.0px;top:176.0px;width:1px;height:35.5px;background:#e8e9eb"></div>
<div class="a" style="left:674.0px;top:176.0px;width:1px;height:35.5px;background:#e8e9eb"></div>
<div class="a" style="left:751.0px;top:176.0px;width:1px;height:35.5px;background:#e8e9eb"></div>
<div class="a" style="left:826.5px;top:176.0px;width:1px;height:35.5px;background:#e8e9eb"></div>
<div class="a" style="left:904.0px;top:176.0px;width:1px;height:35.5px;background:#e8e9eb"></div>
<div class="cb" style="left:7.5px;top:185.0px;width:12.5px;height:12.5px;border-color:#dcdfe6"></div>
<div class="td" style="left:31.25px;top:176.2px;width:45.25px;height:35.5px;justify-content:flex-end;padding-right:6px;color:#606266">6</div>
<div class="td" style="left:76.5px;top:176.2px;width:130.0px;height:35.5px;padding-left:5px;color:#606266"></div>
<div class="td" style="left:206.5px;top:176.2px;width:99.0px;height:35.5px;padding-left:5px;color:#606266">挖除现有破<svg class="el" viewBox="0 0 13.5 3"><circle cx="3.3" cy="1.5" r="0.8" fill="currentColor"/><circle cx="7.45" cy="1.5" r="0.8" fill="currentColor"/><circle cx="11.6" cy="1.5" r="0.8" fill="currentColor"/></svg></div>
<div class="td" style="left:305.5px;top:176.2px;width:77.0px;height:35.5px;padding-left:5px;color:#606266">挖除现有<svg class="el" viewBox="0 0 13.5 3"><circle cx="3.3" cy="1.5" r="0.8" fill="currentColor"/><circle cx="7.45" cy="1.5" r="0.8" fill="currentColor"/><circle cx="11.6" cy="1.5" r="0.8" fill="currentColor"/></svg></div>
<div class="td" style="left:382.5px;top:176.2px;width:67.0px;height:35.5px;justify-content:center;color:#606266">m2</div>
<div class="td" style="left:449.5px;top:176.2px;width:72.0px;height:35.5px;justify-content:flex-end;padding-right:6px;color:#606266">43019.79</div>
<div class="td" style="left:521.5px;top:176.2px;width:77.0px;height:35.5px;justify-content:flex-end;padding-right:6px;color:#606266">1.13</div>
<div class="td" style="left:598.5px;top:176.2px;width:76.0px;height:35.5px;justify-content:flex-end;padding-right:6px;color:#606266">1.58</div>
<div class="td" style="left:674.5px;top:176.2px;width:77.0px;height:35.5px;justify-content:flex-end;padding-right:6px;color:#606266">1.13</div>
<div class="td" style="left:751.5px;top:176.2px;width:75.5px;height:35.5px;justify-content:flex-end;padding-right:6px;color:#606266">0.68</div>
<div class="td" style="left:827px;top:176.2px;width:77.5px;height:35.5px;justify-content:flex-end;padding-right:6px;color:#606266">4.51</div>
<div class="td" style="left:904.5px;top:176.2px;width:75.5px;height:35.5px;justify-content:flex-end;padding-right:6px;color:#606266">194019.25</div>
</div>
<div class="a" style="left:234px;top:396px;width:981px;height:8px;background:#d9e8f7"></div>
<div class="a" style="left:234px;top:396px;width:618px;height:8px;background:linear-gradient(#86c2f4,#74b5ee);border-radius:0 2px 2px 0"></div>
<div class="a" style="left:1215px;top:201px;width:9px;height:195px;background:#d9e8f7"></div>
<div class="a" style="left:1215px;top:201px;width:9px;height:134px;background:linear-gradient(90deg,#74b4ee,#88c3f4);border-radius:2px"></div>
<div class="a" style="left:1215px;top:396px;width:9px;height:8px;background:#fff"></div>
<div class="a" style="left:242px;top:417.5px;font-size:12.7px;line-height:16px;color:#333;font-weight:bold">清单工料机</div>
<svg class="a" style="left:305px;top:417px" width="14" height="14" viewBox="0 0 14 14"><circle cx="7" cy="7" r="6" fill="#9a9a9a"/><text x="7" y="10.6" text-anchor="middle" font-size="9.5" font-weight="bold" fill="#fff" font-family="Liberation Sans">?</text></svg>
<svg class="a" style="left:325px;top:417px" width="11" height="13" viewBox="0 0 11 13"><path d="M1.5 1 V12.5" stroke="#1a8cff" stroke-width="1.8"/><path d="M1.5 1.2 H10 L8 4.5 L10 7.8 H1.5 Z" fill="#1a8cff"/></svg>
<div class="a" style="left:338px;top:415.5px;font-size:14.1px;line-height:19px;color:#333">生成企业清单</div>
<div class="a" style="left:234px;top:440.5px;width:990px;height:159.5px;background:#fff"></div>
<div class="a" style="left:234px;top:440.5px;width:671.5px;height:30.75px;background:#f0f3f8;border-bottom:1px solid #e6e8f2"></div>
<div class="a" style="left:234px;top:471.25px;width:671.5px;height:31.25px;background:#fff;border-bottom:1px solid #e6e8f2"></div>
<div class="a" style="left:234px;top:502.5px;width:671.5px;height:30.0px;background:#fafafa;border-bottom:1px solid #e6e8f2"></div>
<div class="a" style="left:234px;top:532.5px;width:671.5px;height:31.25px;background:#fff;border-bottom:1px solid #e6e8f2"></div>
<div class="a" style="left:234px;top:563.75px;width:671.5px;height:29.75px;background:#fafafa;border-bottom:1px solid #e6e8f2"></div>
<div class="a" style="left:266.0px;top:440.5px;width:1px;height:153.0px;background:#e6e8f2"></div>
<div class="a" style="left:333.0px;top:440.5px;width:1px;height:153.0px;background:#e6e8f2"></div>
<div class="a" style="left:404.75px;top:440.5px;width:1px;height:153.0px;background:#e6e8f2"></div>
<div class="a" style="left:491.0px;top:440.5px;width:1px;height:153.0px;background:#e6e8f2"></div>
<div class="a" style="left:558.25px;top:440.5px;width:1px;height:153.0px;background:#e6e8f2"></div>
<div class="a" style="left:621.25px;top:440.5px;width:1px;height:153.0px;background:#e6e8f2"></div>
<div class="a" style="left:684.0px;top:440.5px;width:1px;height:153.0px;background:#e6e8f2"></div>
<div class="a" style="left:761.0px;top:440.5px;width:1px;height:153.0px;background:#e6e8f2"></div>
<div class="a" style="left:837.0px;top:440.5px;width:1px;height:153.0px;background:#e6e8f2"></div>
<div class="a" style="left:905.0px;top:440.5px;width:1px;height:153.0px;background:#e6e8f2"></div>
<div class="th" style="left:266.5px;top:440.5px;width:67.0px;height:30.75px;color:#555">类别</div>
<div class="th" style="left:333.5px;top:440.5px;width:71.75px;height:30.75px;color:#555">大类</div>
<div class="th" style="left:405.25px;top:440.5px;width:86.25px;height:30.75px;color:#555">名称</div>
<div class="th" style="left:491.5px;top:440.5px;width:67.25px;height:30.75px;color:#555">规格</div>
<div class="th" style="left:558.75px;top:440.5px;width:63.0px;height:30.75px;color:#555">单位</div>
<div class="th" style="left:621.75px;top:440.5px;width:62.75px;height:30.75px;color:#555">数量</div>
<div class="th" style="left:684.5px;top:440.5px;width:77.0px;height:30.75px;color:#555">单价</div>
<div class="th" style="left:761.5px;top:440.5px;width:76.0px;height:30.75px;color:#555">合价</div>
<div class="th" style="left:837.5px;top:440.5px;width:68.0px;height:30.75px;color:#555">行备注</div>
<div class="cb" style="left:243.5px;top:450px;width:14px;height:14px;border-color:#d5d8de"></div>
<div class="cb" style="left:243.5px;top:480.75px;width:14px;height:14px;border-color:#d5d8de"></div>
<div class="td" style="display:block;line-height:31.25px;left:266.5px;top:472.25px;width:67.0px;height:31.25px;text-align:center;padding:0 7px;color:#555">人工费</div>
<div class="td" style="display:block;line-height:31.25px;left:333.5px;top:472.25px;width:71.75px;height:31.25px;text-align:center;padding:0 7px;color:#555">C安装</div>
<div class="td" style="display:block;line-height:31.25px;left:405.25px;top:472.25px;width:86.25px;height:31.25px;text-align:center;padding:0 7px;color:#555">龙骨安装</div>
<div class="td" style="display:block;line-height:31.25px;left:491.5px;top:472.25px;width:67.25px;height:31.25px;text-align:center;padding:0 7px;color:#555"></div>
<div class="td" style="display:block;line-height:31.25px;left:558.75px;top:472.25px;width:63.0px;height:31.25px;text-align:center;padding:0 7px;color:#555">m</div>
<div class="td" style="display:block;line-height:31.25px;left:621.75px;top:472.25px;width:62.75px;height:31.25px;text-align:right;padding-right:6px;color:#555">10</div>
<div class="td" style="display:block;line-height:31.25px;left:684.5px;top:472.25px;width:77.0px;height:31.25px;text-align:right;padding-right:6px;color:#555">500</div>
<div class="td" style="display:block;line-height:31.25px;left:761.5px;top:472.25px;width:76.0px;height:31.25px;text-align:right;padding-right:6px;color:#555">5000</div>
<div class="td" style="display:block;line-height:31.25px;left:837.5px;top:472.25px;width:68.0px;height:31.25px;text-align:center;padding:0 7px;color:#555"></div>
<div class="cb" style="left:243.5px;top:512.0px;width:14px;height:14px;border-color:#d5d8de"></div>
<div class="td" style="display:block;line-height:30.0px;left:266.5px;top:503.5px;width:67.0px;height:30.0px;text-align:center;padding:0 7px;color:#555">材料</div>
<div class="td" style="display:block;line-height:30.0px;left:333.5px;top:503.5px;width:71.75px;height:30.0px;text-align:center;padding:0 7px;color:#555">0101 钢筋</div>
<div class="td" style="display:block;line-height:30.0px;left:405.25px;top:503.5px;width:86.25px;height:30.0px;text-align:center;padding:0 7px;color:#555">钢筋</div>
<div class="td" style="display:block;line-height:30.0px;left:491.5px;top:503.5px;width:67.25px;height:30.0px;text-align:center;padding:0 7px;color:#555">HRB335≤</div>
<div class="td" style="display:block;line-height:30.0px;left:558.75px;top:503.5px;width:63.0px;height:30.0px;text-align:center;padding:0 7px;color:#555">t</div>
<div class="td" style="display:block;line-height:30.0px;left:621.75px;top:503.5px;width:62.75px;height:30.0px;text-align:right;padding-right:6px;color:#555">1</div>
<div class="td" style="display:block;line-height:30.0px;left:684.5px;top:503.5px;width:77.0px;height:30.0px;text-align:right;padding-right:6px;color:#555">4200</div>
<div class="td" style="display:block;line-height:30.0px;left:761.5px;top:503.5px;width:76.0px;height:30.0px;text-align:right;padding-right:6px;color:#555">4200</div>
<div class="td" style="display:block;line-height:30.0px;left:837.5px;top:503.5px;width:68.0px;height:30.0px;text-align:center;padding:0 7px;color:#555"></div>
<div class="cb" style="left:243.5px;top:542.0px;width:14px;height:14px;border-color:#d5d8de"></div>
<div class="td" style="display:block;line-height:31.25px;left:266.5px;top:533.5px;width:67.0px;height:31.25px;text-align:center;padding:0 7px;color:#555">机械租赁</div>
<div class="td" style="display:block;line-height:31.25px;left:333.5px;top:533.5px;width:71.75px;height:31.25px;text-align:center;padding:0 7px;color:#555">挖掘机械</div>
<div class="td" style="display:block;line-height:31.25px;left:405.25px;top:533.5px;width:86.25px;height:31.25px;text-align:center;padding:0 7px;color:#555">大型通用挖掘机</div>
<div class="td" style="display:block;line-height:31.25px;left:491.5px;top:533.5px;width:67.25px;height:31.25px;text-align:center;padding:0 7px;color:#555"></div>
<div class="td" style="display:block;line-height:31.25px;left:558.75px;top:533.5px;width:63.0px;height:31.25px;text-align:center;padding:0 7px;color:#555">台班</div>
<div class="td" style="display:block;line-height:31.25px;left:621.75px;top:533.5px;width:62.75px;height:31.25px;text-align:right;padding-right:6px;color:#555">10</div>
<div class="td" style="display:block;line-height:31.25px;left:684.5px;top:533.5px;width:77.0px;height:31.25px;text-align:right;padding-right:6px;color:#555">500</div>
<div class="td" style="display:block;line-height:31.25px;left:761.5px;top:533.5px;width:76.0px;height:31.25px;text-align:right;padding-right:6px;color:#555">5000</div>
<div class="td" style="display:block;line-height:31.25px;left:837.5px;top:533.5px;width:68.0px;height:31.25px;text-align:center;padding:0 7px;color:#555"></div>
<div class="cb" style="left:243.5px;top:573.25px;width:14px;height:14px;border-color:#d5d8de"></div>
<div class="td" style="display:block;line-height:29.75px;left:266.5px;top:564.75px;width:67.0px;height:29.75px;text-align:center;padding:0 7px;color:#555">其它费用</div>
<div class="td" style="display:block;line-height:29.75px;left:333.5px;top:564.75px;width:71.75px;height:29.75px;text-align:center;padding:0 7px;color:#555">间接费</div>
<div class="td" style="display:block;line-height:29.75px;left:405.25px;top:564.75px;width:86.25px;height:29.75px;text-align:center;padding:0 7px;color:#555">修理费</div>
<div class="td" style="display:block;line-height:29.75px;left:491.5px;top:564.75px;width:67.25px;height:29.75px;text-align:center;padding:0 7px;color:#555"></div>
<div class="td" style="display:block;line-height:29.75px;left:558.75px;top:564.75px;width:63.0px;height:29.75px;text-align:center;padding:0 7px;color:#555"></div>
<div class="td" style="display:block;line-height:29.75px;left:621.75px;top:564.75px;width:62.75px;height:29.75px;text-align:right;padding-right:6px;color:#555">15</div>
<div class="td" style="display:block;line-height:29.75px;left:684.5px;top:564.75px;width:77.0px;height:29.75px;text-align:right;padding-right:6px;color:#555">1000</div>
<div class="td" style="display:block;line-height:29.75px;left:761.5px;top:564.75px;width:76.0px;height:29.75px;text-align:right;padding-right:6px;color:#555">15000</div>
<div class="td" style="display:block;line-height:29.75px;left:837.5px;top:564.75px;width:68.0px;height:29.75px;text-align:center;padding:0 7px;color:#555"></div>
<div class="a" style="left:1087.5px;top:97.5px;width:134px;height:48px;transform:rotate(44.5deg);border:4px solid rgba(242,92,100,0.58)"></div>
<div class="a" style="left:1104.4px;top:76.6px;width:40px;height:40px;line-height:40px;text-align:center;transform:rotate(44.5deg);font-family:'Liberation Serif',serif;font-weight:400;font-size:31px;color:rgba(242,92,100,0.58)">已</div>
<div class="a" style="left:1137px;top:102.5px;width:40px;height:40px;line-height:40px;text-align:center;transform:rotate(44.5deg);font-family:'Liberation Serif',serif;font-weight:400;font-size:31px;color:rgba(242,92,100,0.58)">审</div>
<div class="a" style="left:1161.7px;top:131.7px;width:40px;height:40px;line-height:40px;text-align:center;transform:rotate(44.5deg);font-family:'Liberation Serif',serif;font-weight:400;font-size:31px;color:rgba(242,92,100,0.58)">核</div>
</body>
</html>
